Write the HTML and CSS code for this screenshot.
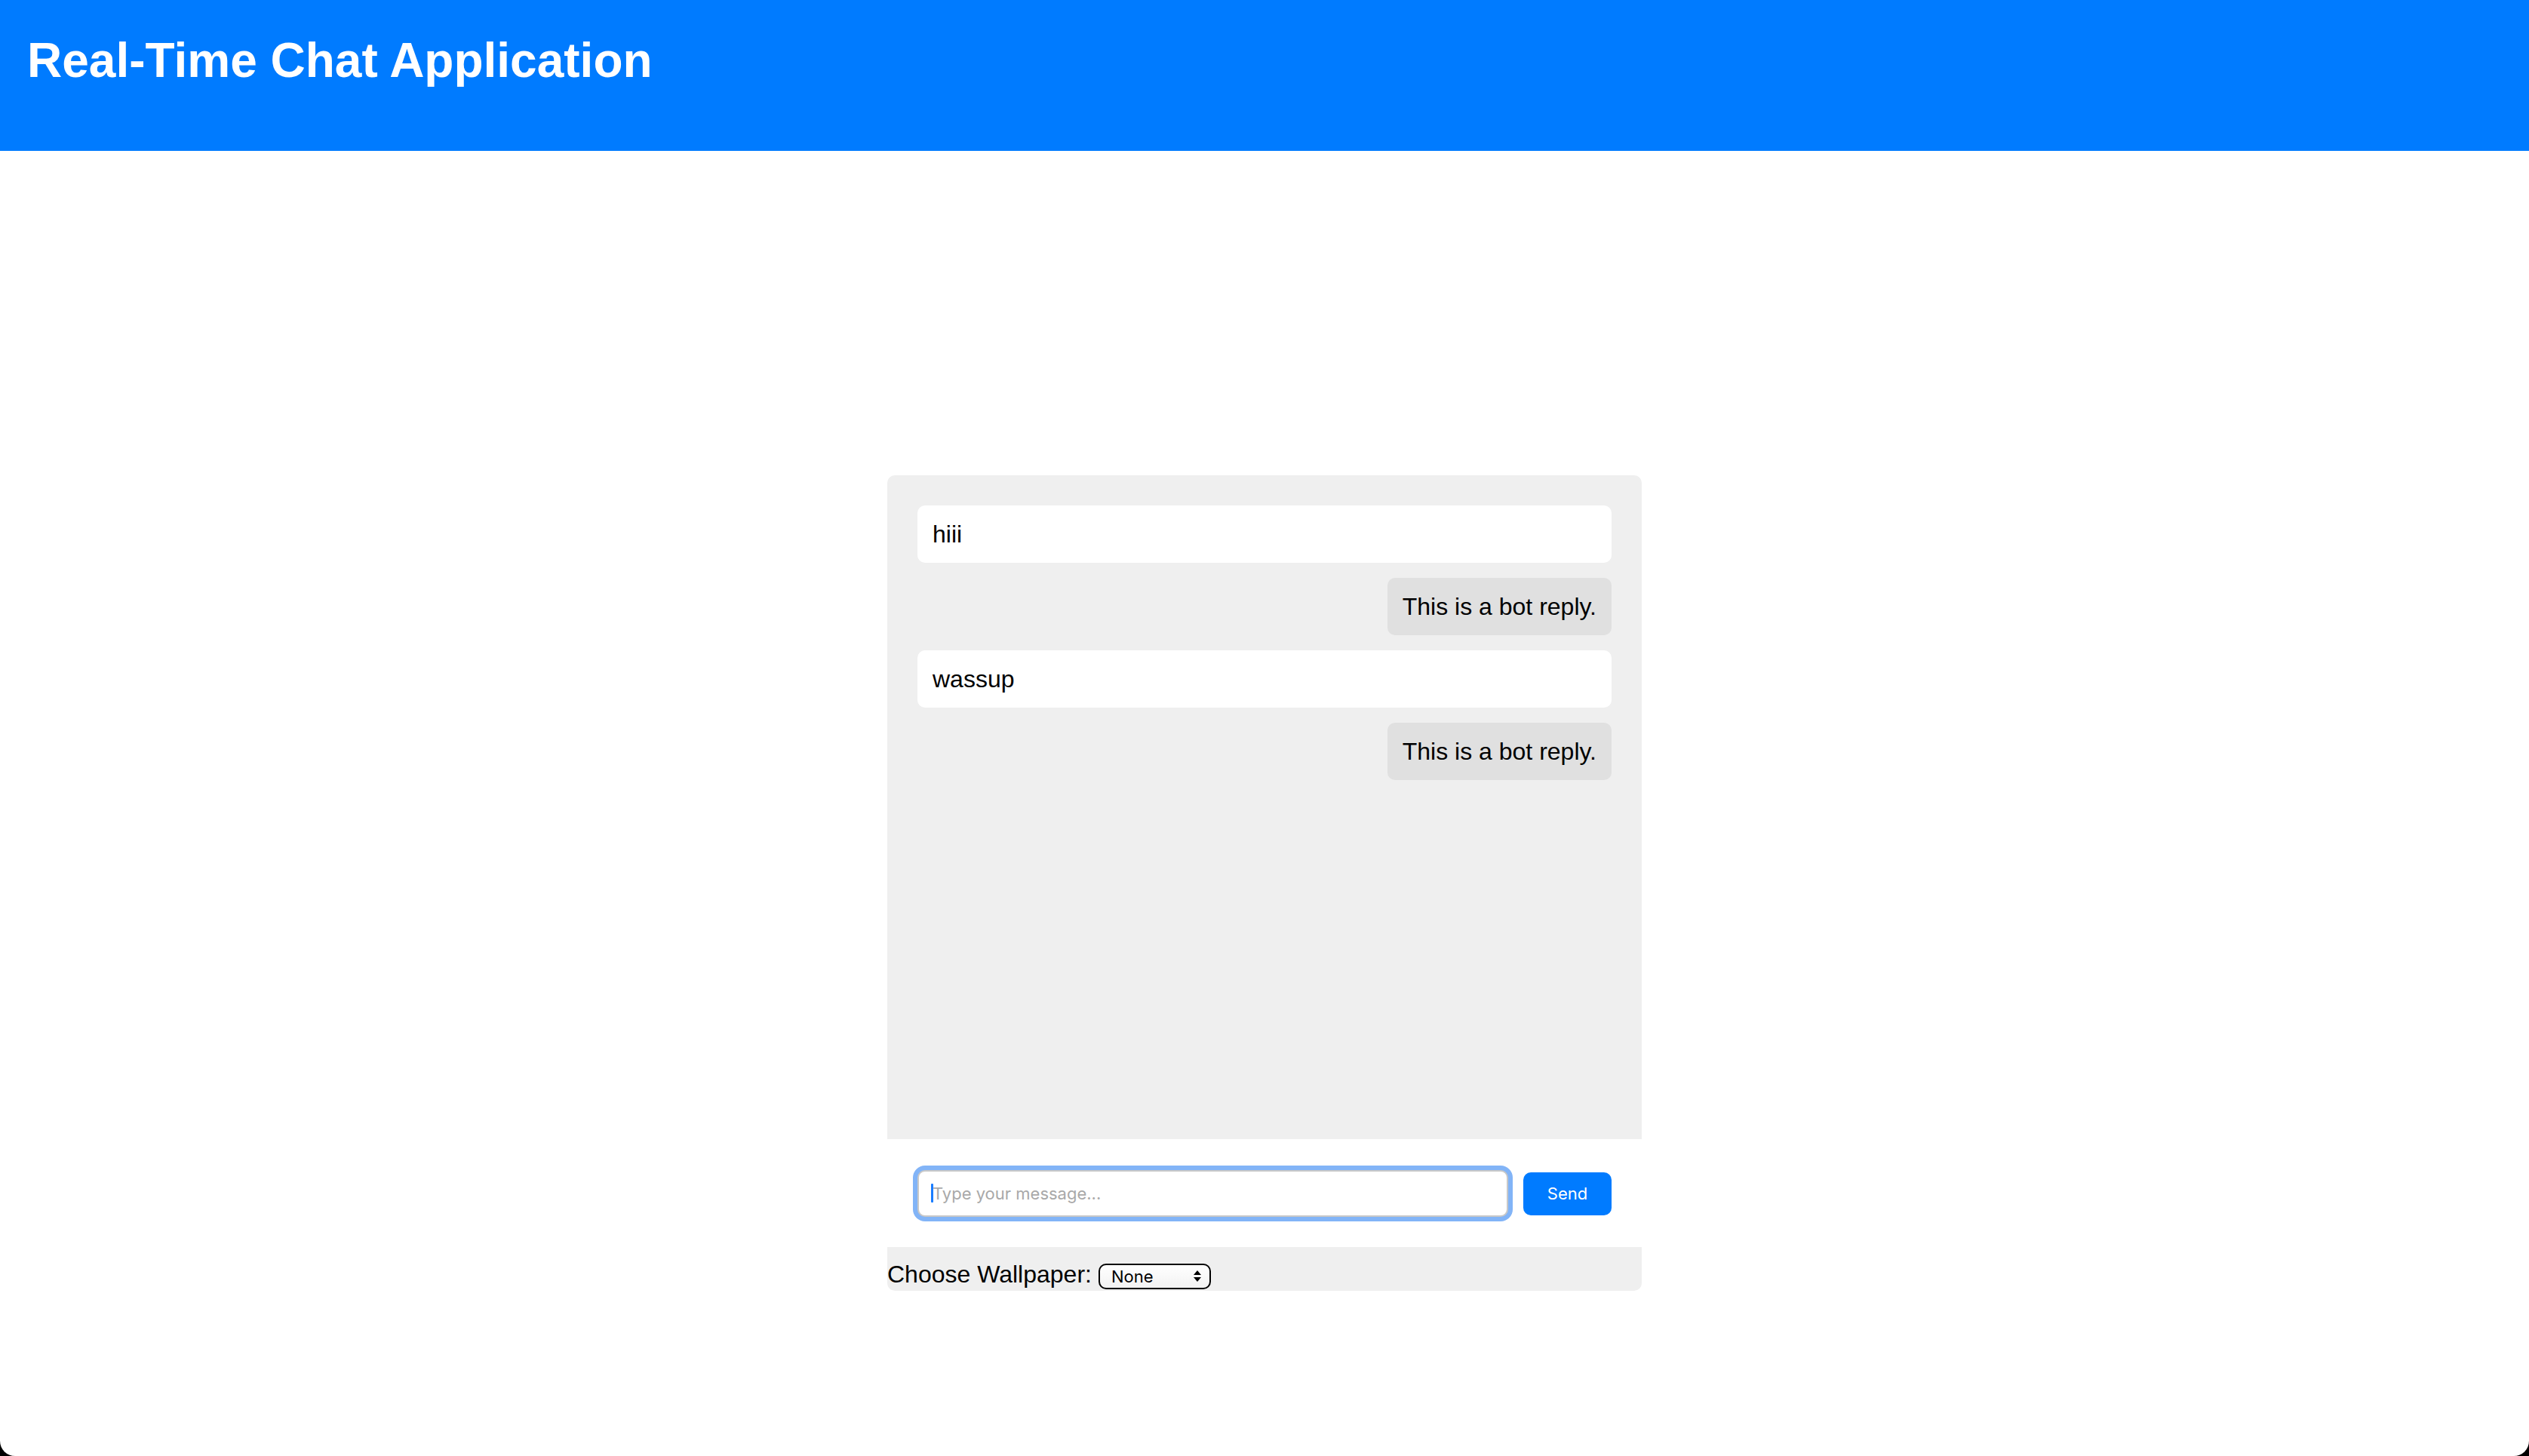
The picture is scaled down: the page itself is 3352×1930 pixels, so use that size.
FILE: index.html
```html
<!DOCTYPE html>
<html lang="en">
<head>
<meta charset="utf-8">
<title>Real-Time Chat Application</title>
<link rel="stylesheet" href="styles.css">
</head>
<body>
  <header class="app-header">
    <h1>Real-Time Chat Application</h1>
  </header>
  <main class="chat-container">
    <div class="chat-box">
      <div class="message user">hiii</div>
      <div class="message bot">This is a bot reply.</div>
      <div class="message user">wassup</div>
      <div class="message bot">This is a bot reply.</div>
    </div>
    <div class="input-area">
      <span class="input-wrap">
        <input type="text" class="message-input" placeholder="Type your message...">
        <span class="caret"></span>
      </span>
      <button class="send-btn" type="button">Send</button>
    </div>
    <div class="wallpaper-bar">
      <label for="wallpaper" class="wallpaper-label">Choose Wallpaper:</label>
      <span class="select-wrap">
        <select id="wallpaper" class="wallpaper-select">
          <option>None</option>
          <option>Blue</option>
          <option>Dark</option>
        </select>
      </span>
    </div>
  </main>
</body>
</html>
```
FILE: styles.css
```css
html {
  background: #000;
}

body {
  margin: 0;
  min-height: 1930px;
  background: #fff;
  border-radius: 0 0 20px 20px;
  overflow: hidden;
  font-family: "Liberation Sans", Arial, sans-serif;
  font-size: 32px;
  color: #000;
}

.app-header {
  background: #007bff;
  height: 200px;
  box-sizing: border-box;
  padding: 43px 36px 0;
  color: #fff;
}

.app-header h1 {
  margin: 0;
  font-size: 64px;
  font-weight: bold;
  line-height: normal;
}

.chat-container {
  width: 1000px;
  margin: 430px auto 0;
  background: #efefef;
  border-radius: 10px;
  overflow: hidden;
}

.chat-box {
  height: 800px;
  padding: 40px;
  display: flex;
  flex-direction: column;
  gap: 20px;
}

.message {
  padding: 20px;
  border-radius: 10px;
  line-height: 36px;
}

.message.user {
  background: #fff;
}

.message.bot {
  background: #e0e0e0;
  align-self: flex-end;
}

.input-area {
  background: #fff;
  display: flex;
  align-items: center;
  gap: 20px;
  padding: 41px 40px 40px;
}

.input-wrap {
  flex: 1;
  position: relative;
  display: flex;
}

.message-input {
  flex: 1;
  height: 62px;
  box-sizing: border-box;
  border: 2px solid #c8c8c8;
  border-radius: 10px;
  padding: 0 18px;
  font-family: Inter, "Noto Sans", sans-serif;
  font-size: 22px;
  color: #000;
  outline: none;
  box-shadow: 0 0 0 6px #82b4f7;
}

.message-input::placeholder {
  color: #a9a9a9;
}

.caret {
  position: absolute;
  left: 18px;
  top: 18px;
  width: 3px;
  height: 25px;
  background: #1a7dff;
  border-radius: 1px;
}

.send-btn {
  width: 117px;
  height: 57px;
  padding: 0;
  border: 0;
  border-radius: 10px;
  background: #007bff;
  color: #fff;
  font-family: Inter, "Noto Sans", sans-serif;
  font-size: 22px;
}

.wallpaper-bar {
  height: 58px;
  box-sizing: border-box;
  padding-top: 18px;
  display: flex;
  align-items: baseline;
  gap: 9px;
}

.wallpaper-label {
  line-height: normal;
}

.select-wrap {
  position: relative;
  display: inline-flex;
}

.wallpaper-select {
  appearance: none;
  -webkit-appearance: none;
  width: 149px;
  height: 34px;
  box-sizing: border-box;
  border: 2px solid #000;
  border-radius: 10px;
  background: linear-gradient(#ffffff, #f2f2f2);
  padding: 0 0 0 15px;
  font-family: Inter, "Noto Sans", sans-serif;
  font-size: 22px;
  color: #000;
}

.select-wrap::before,
.select-wrap::after {
  content: "";
  position: absolute;
  left: 126px;
  width: 0;
  height: 0;
  border-left: 5px solid transparent;
  border-right: 5px solid transparent;
  pointer-events: none;
}

.select-wrap::before {
  top: 9px;
  border-bottom: 6px solid #000;
}

.select-wrap::after {
  top: 18px;
  border-top: 6px solid #000;
}
```
